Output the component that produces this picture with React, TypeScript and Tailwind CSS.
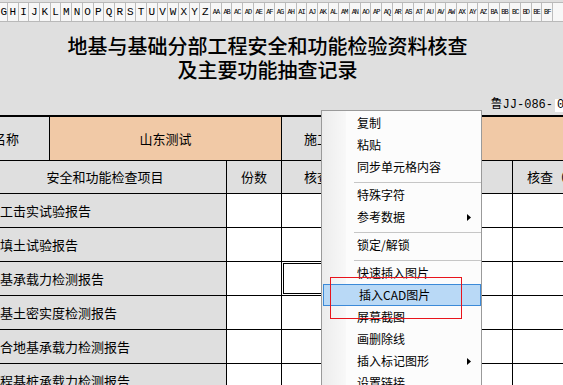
import { useState } from 'react';

const CJK = "font-['Noto_Sans_CJK_SC',sans-serif]";

const LETTERS = 'HIJKLMNOPQRSTUVWXYZ'.split('');
const EXTRA = 'ABCDEFGHIJKLMNOPQRSTUVWXYZ'
    .split('')
    .map(c => 'A' + c)
    .concat(['BA', 'BB', 'BC', 'BD', 'BE', 'BF']);

const ROWS = [
    '工击实试验报告',
    '填土试验报告',
    '基承载力检测报告',
    '基土密实度检测报告',
    '合地基承载力检测报告',
    '程基桩承载力检测报告',
];

type MenuEntry = { label: string; sub?: boolean; active?: boolean } | 'sep';

const MENU: MenuEntry[] = [
    { label: '复制' },
    { label: '粘贴' },
    { label: '同步单元格内容' },
    'sep',
    { label: '特殊字符' },
    { label: '参考数据', sub: true },
    'sep',
    { label: '锁定/解锁' },
    'sep',
    { label: '快速插入图片' },
    { label: '插入CAD图片', active: true },
    { label: '屏幕截图' },
    { label: '画删除线' },
    { label: '插入标记图形', sub: true },
    { label: '设置链接' },
];

const Ruler = () => (
    <div className="mt-[2px] flex h-[20px] border-t border-b border-[#b9b9b9] bg-[#f7f7f7] font-['Liberation_Mono',monospace] text-black">
        <div className="flex w-[8px] shrink-0 items-center justify-end overflow-hidden border-r border-[#bdbdbd] text-[11px]">
            G
        </div>
        {LETTERS.map(l => (
            <div
                key={l}
                className="flex w-[10.7px] shrink-0 items-center justify-center border-r border-[#bdbdbd] text-[11px]"
            >
                {l}
            </div>
        ))}
        {EXTRA.map(l => (
            <div
                key={l}
                className="flex w-[10.7px] shrink-0 items-center justify-center overflow-hidden border-r border-[#bdbdbd] text-[7px] tracking-[-1px]"
            >
                {l}
            </div>
        ))}
    </div>
);

const Arrow = () => (
    <svg width="4" height="7" viewBox="0 0 4 7" className="absolute right-[10px] top-[8px]">
        <path d="M0 0 L4 3.5 L0 7 Z" fill="#000" />
    </svg>
);

const ContextMenu = () => {
    const [hover, setHover] = useState<string | null>(null);
    return (
        <div className="absolute left-[321px] top-[110px] flex h-[300px] w-[161px] flex-col border border-[#9a9a9a] bg-[#fcfcfc] pt-[1px]">
            <div className="absolute bottom-0 left-0 top-0 w-[24px] bg-gradient-to-r from-[#ececec] to-[#f8f8f8]" />
            {MENU.map((m, i) =>
                m === 'sep' ? (
                    <div key={i} className="relative h-[6px] shrink-0">
                        <div className="ml-[32px] mt-[4px] h-px bg-[#c6c6c6]" />
                    </div>
                ) : (
                    <div
                        key={i}
                        onMouseEnter={() => setHover(m.label)}
                        onMouseLeave={() => setHover(null)}
                        className={`relative flex h-[22px] shrink-0 items-center pl-[35px] text-[12px] text-black ${CJK} ${
                            m.active || hover === m.label
                                ? 'ml-[1px] border border-[#3c8ad8] bg-[#b9d9f6] pl-[34px]'
                                : ''
                        }`}
                    >
                        {m.label}
                        {m.sub && <Arrow />}
                    </div>
                ),
            )}
        </div>
    );
};

export default function App() {
    return (
        <div className={`relative h-[385px] w-[563px] overflow-hidden bg-[#dfdfdf] ${CJK}`}>
            <Ruler />

            <div className="mt-[12px] w-[535px] text-center text-[20px] font-medium leading-[24px] text-black">
                <div>地基与基础分部工程安全和功能检验资料核查</div>
                <div>及主要功能抽查记录</div>
            </div>

            <div className="mt-[17px] flex h-[13px] items-center justify-end">
                <span className="font-['Liberation_Mono','Noto_Sans_CJK_SC',monospace] text-[12px] leading-[13px] text-black">
                    鲁JJ-086-
                </span>
                <div className="ml-[2px] flex h-[13px] w-[8px] items-center overflow-hidden bg-white pl-[2px] font-['Liberation_Mono',monospace] text-[12px] leading-[13px]">
                    0
                </div>
            </div>

            <div className="mt-[3px] border-t-2 border-black text-[13px] text-black">
                <div className="flex h-[44px] border-b border-black">
                    <div className="flex w-[50px] shrink-0 items-center justify-end overflow-hidden whitespace-nowrap border-r border-black pr-[30px]">
                        名称
                    </div>
                    <div className="flex w-[232px] shrink-0 items-center justify-center border-r border-black bg-[#f1c9a6]">
                        山东测试
                    </div>
                    <div className="flex w-[120px] shrink-0 items-center pl-[22px]">施工单位</div>
                    <div className="flex-1 bg-[#f1c9a6]" />
                </div>

                <div className="flex h-[33px] border-b border-black">
                    <div className="flex w-[227px] shrink-0 items-center justify-center border-r border-black pr-[16px]">
                        安全和功能检查项目
                    </div>
                    <div className="flex w-[55px] shrink-0 items-center justify-center border-r border-black">
                        份数
                    </div>
                    <div className="flex w-[231px] shrink-0 items-center border-r border-black pl-[22px]">
                        核查意见
                    </div>
                    <div className="flex flex-1 items-center overflow-hidden whitespace-nowrap pl-[14px]">
                        核查（抽查）人
                    </div>
                </div>

                {ROWS.map((r, i) => (
                    <div key={r} className="flex h-[34px] border-b border-black">
                        <div className="flex w-[227px] shrink-0 items-center overflow-hidden whitespace-nowrap border-r border-black">
                            {r}
                        </div>
                        <div className="w-[55px] shrink-0 border-r border-black bg-white" />
                        <div className="w-[231px] shrink-0 border-r border-black bg-white p-[1px]">
                            {i === 2 && <div className="h-full w-[120px] border border-black" />}
                        </div>
                        <div className="flex-1 bg-white" />
                    </div>
                ))}
            </div>

            <ContextMenu />

            <div className="absolute left-[330px] top-[277px] h-[42px] w-[132px] border border-[#e8141c]" />
        </div>
    );
}
